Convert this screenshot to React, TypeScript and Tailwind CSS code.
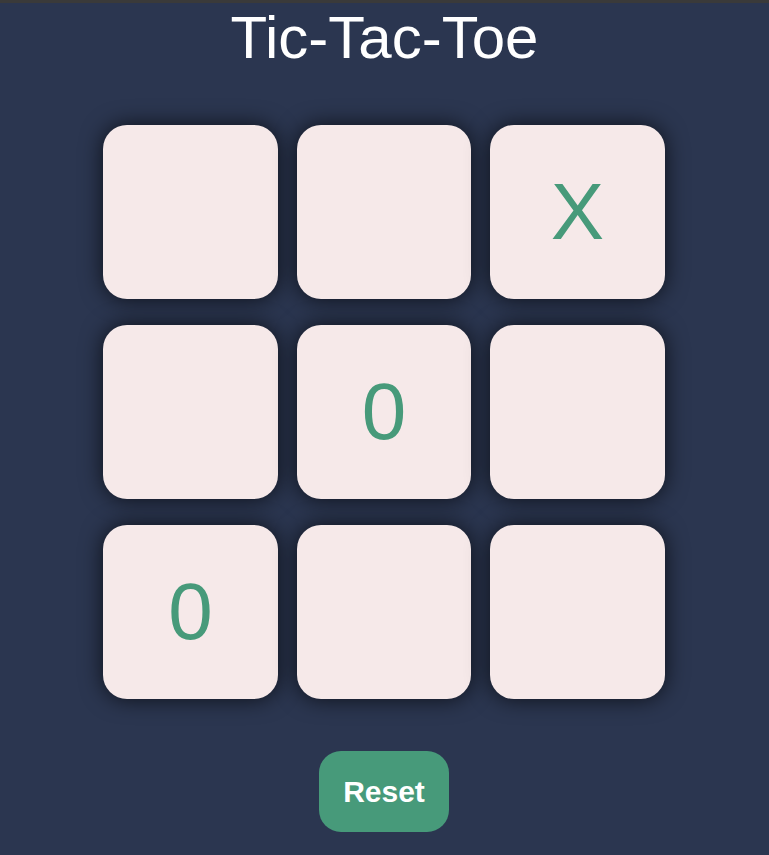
export default function App() {
  const cells = ["", "", "X", "", "0", "", "0", "", ""];
  return (
    <div className="min-h-[855px] w-full bg-[#2b3650] flex flex-col items-center" style={{ fontFamily: '"Liberation Sans", Arial, sans-serif' }}>
      <div className="w-full h-[3px] bg-[#3a3a3a]" />
      <h1 className="text-[60px] leading-none text-white mt-[5px]">Tic-Tac-Toe</h1>
      <div className="mt-[57px] -ml-[1px] grid grid-cols-[175px_174px_175px] gap-x-[19px] gap-y-[26px]">
        {cells.map((c, i) => (
          <div
            key={i}
            className="h-[174px] rounded-[24px] bg-[#f6e9e9] shadow-[0_0_22px_rgba(0,0,0,0.7)] flex items-center justify-center text-[80px] text-[#479a7a]"
          >
            {c}
          </div>
        ))}
      </div>
      <button className="mt-[52px] -ml-[1px] w-[130px] h-[81px] rounded-[22px] bg-[#479a7a] text-white font-bold text-[30px]">Reset</button>
    </div>
  );
}
